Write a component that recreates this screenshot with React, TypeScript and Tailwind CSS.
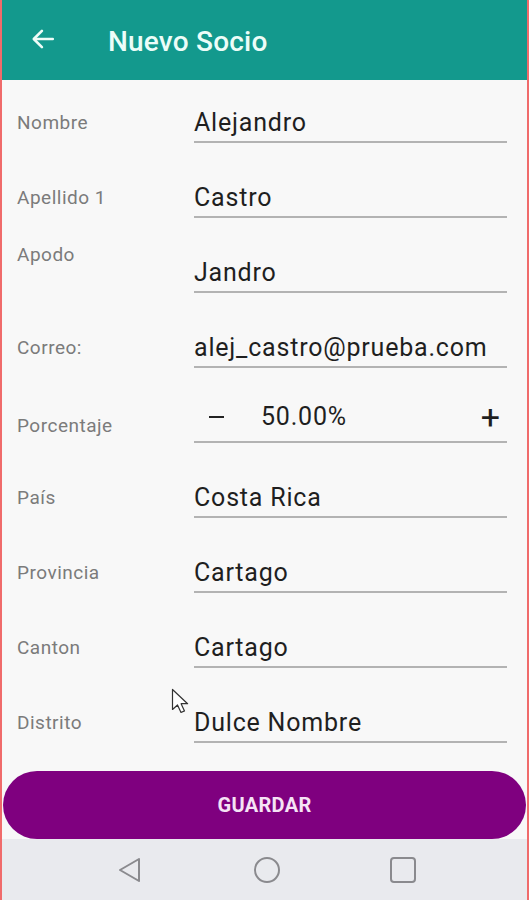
import React from "react";

type Field = {
    label: string;
    value: string;
    labelClass?: string;
};

const fields: Field[] = [
    { label: "Nombre", value: "Alejandro" },
    { label: "Apellido 1", value: "Castro" },
    { label: "Apodo", value: "Jandro", labelClass: "self-start -mt-[5px]" },
    { label: "Correo:", value: "alej_castro@prueba.com" },
    { label: "Porcentaje", value: "", labelClass: "mt-[10px]" },
    { label: "País", value: "Costa Rica" },
    { label: "Provincia", value: "Cartago" },
    { label: "Canton", value: "Cartago" },
    { label: "Distrito", value: "Dulce Nombre" },
];

const FormRow = ({ field }: { field: Field }) => {
    const isPercent = field.label === "Porcentaje";
    return (
        <div className="flex items-center h-[44px]">
            <span className={`w-[177px] shrink-0 text-[19px] text-[#7b7b7b] leading-[22px] tracking-[0.5px] ${field.labelClass ?? "mt-[4px]"}`}>
                {field.label}
            </span>
            <div className="w-[313px] h-full flex items-center pt-[4px] border-b-2 border-[#b3b3b3]">
                {isPercent ? (
                    <div className="flex items-center w-full -mt-[10px] text-[#1f1f1f]">
                        <span className="w-[15px] h-[2.5px] bg-[#222] ml-[15px]" />
                        <span className="ml-[37px] text-[25px] tracking-[0.8px]">50.00%</span>
                        <span className="ml-auto mr-[7px] text-[34px] leading-none">+</span>
                    </div>
                ) : (
                    <span className="text-[25px] text-[#1f1f1f] tracking-[0.8px] leading-none">{field.value}</span>
                )}
            </div>
        </div>
    );
};

const App = () => {
    return (
        <div
            className="relative w-[529px] h-[900px] flex flex-col bg-[#f8f8f8] border-x-2 border-[#f06b6b] overflow-hidden"
            style={{ fontFamily: "Roboto, 'Liberation Sans', sans-serif" }}
        >
            <header className="h-[80px] shrink-0 bg-[#13998d] flex items-center">
                <svg width="26" height="26" viewBox="0 0 24 24" className="ml-[28px] -mt-[2px]" fill="none" stroke="#eefcf8" strokeWidth="2.4" strokeLinecap="round" strokeLinejoin="round">
                    <path d="M21 12H4" />
                    <path d="M11 4.5 3.5 12l7.5 7.5" />
                </svg>
                <h1 className="ml-[52px] mt-[4px] text-[28px] font-medium text-[#ecfdf8] tracking-[0.2px]">Nuevo Socio</h1>
            </header>

            <main className="flex flex-col gap-[31px] pt-[19px] pl-[15px]">
                {fields.map((field) => (
                    <FormRow key={field.label} field={field} />
                ))}
            </main>

            <button className="mt-[28px] mx-[1px] h-[68px] shrink-0 rounded-full bg-[#7f007f] text-[#f5e3f5] text-[20px] font-bold tracking-[0.3px]">
                GUARDAR
            </button>

            <nav className="flex-1 bg-[#e9eaee] flex items-center -mx-[2px]">
                <svg width="26" height="28" viewBox="0 0 26 28" className="ml-[117px]" fill="none" stroke="#8a8a8e" strokeWidth="2" strokeLinejoin="round">
                    <path d="M22 3 3 14l19 11z" />
                </svg>
                <svg width="28" height="28" viewBox="0 0 28 28" className="ml-[110px]" fill="none" stroke="#8a8a8e" strokeWidth="2">
                    <circle cx="14" cy="14" r="12" />
                </svg>
                <svg width="28" height="28" viewBox="0 0 28 28" className="ml-[108px]" fill="none" stroke="#8a8a8e" strokeWidth="2">
                    <rect x="2" y="2" width="24" height="24" rx="3" />
                </svg>
            </nav>

            <svg width="20" height="28" viewBox="0 0 20 28" className="absolute left-[169px] top-[688px]">
                <path d="M1.5 1.5v20l5-4.5 3.5 7.5 3.5-1.6-3.4-7.2h6.5z" fill="#fff" stroke="#333" strokeWidth="1.2" strokeLinejoin="round" />
            </svg>
        </div>
    );
};

export default App;
